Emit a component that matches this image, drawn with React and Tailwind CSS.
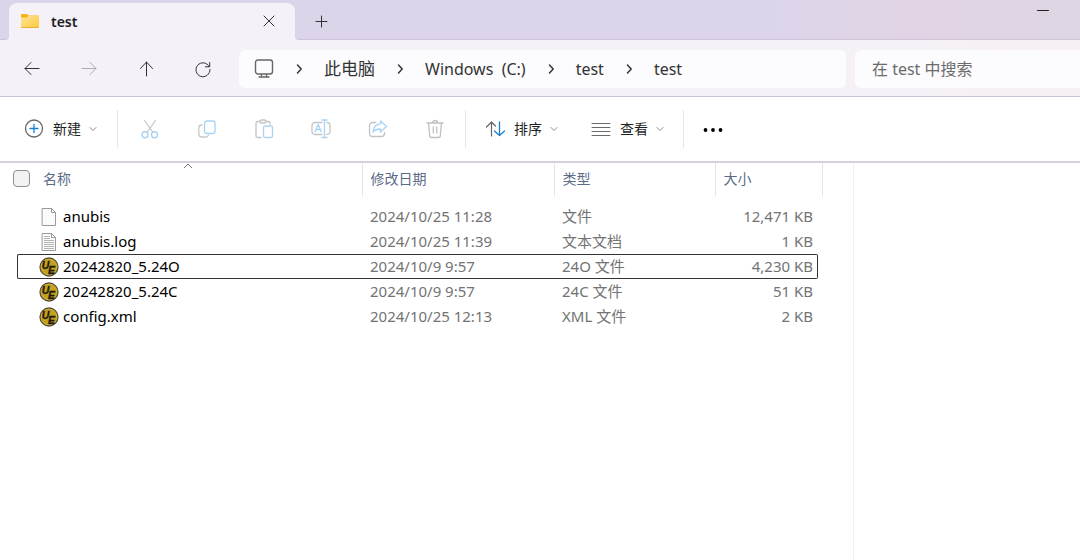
import React from "react";

const files = [
  { name: "anubis", date: "2024/10/25 11:28", type: "文件", size: "12,471 KB", icon: "blank" },
  { name: "anubis.log", date: "2024/10/25 11:39", type: "文本文档", size: "1 KB", icon: "text" },
  { name: "20242820_5.24O", date: "2024/10/9 9:57", type: "24O 文件", size: "4,230 KB", icon: "ue", focused: true },
  { name: "20242820_5.24C", date: "2024/10/9 9:57", type: "24C 文件", size: "51 KB", icon: "ue" },
  { name: "config.xml", date: "2024/10/25 12:13", type: "XML 文件", size: "2 KB", icon: "ue" },
];

function Icon({ size = 20, className = "", children }) {
  return (
    <svg
      width={size}
      height={size}
      viewBox={`0 0 ${size} ${size}`}
      fill="none"
      strokeLinecap="round"
      strokeLinejoin="round"
      className={`shrink-0 ${className}`}
      aria-hidden="true"
    >
      {children}
    </svg>
  );
}

function FolderIcon() {
  return (
    <Icon>
      <defs>
        <linearGradient id="folder" x1="0" y1="0" x2="1" y2="1">
          <stop offset="0" stopColor="#ffe59a" />
          <stop offset="1" stopColor="#fdc93c" />
        </linearGradient>
      </defs>
      <path d="M1 3.200C1 2.500 1.500 2 2.200 2h4.200c.5 0 .8.2 1.100.5L8.600 3.500H17.800c.7 0 1.200.5 1.200 1.200V8H1z" fill="#f5b21d" />
      <path d="M1 5.500h5.800L8.800 3.700H19v11.100c0 .7-.5 1.200-1.200 1.200H2.200C1.500 16 1 15.500 1 14.800z" fill="url(#folder)" />
      <path d="M1.600 15.500h16.800" stroke="#eeb02c" />
    </Icon>
  );
}

function Crumb({ large, children }) {
  return (
    <>
      <li aria-hidden="true">
        <svg width="8" height="12" viewBox="0 0 8 12" fill="none" stroke="#333" strokeWidth="1.500" strokeLinecap="round" strokeLinejoin="round">
          <path d="M2.500 2 6.200 6 2.500 10" />
        </svg>
      </li>
      <li>
        <a href="#" className={`whitespace-pre ${large ? "text-[17px]" : "text-base"}`}>{children}</a>
      </li>
    </>
  );
}

function ChevronDown() {
  return (
    <svg width="8" height="8" viewBox="0 0 8 8" fill="none" stroke="#8a8a8a" strokeLinecap="round" aria-hidden="true">
      <path d="M1 2.500 4 5.500 7 2.500" />
    </svg>
  );
}

function MenuButton({ label, children }) {
  return (
    <button type="button" aria-haspopup="menu" className="flex h-10 shrink-0 items-center px-4 text-sm text-[#1f1f1f]">
      {children}
      <span className="ml-[9px] mr-2">{label}</span>
      <ChevronDown />
    </button>
  );
}

function ToolButton({ label, children }) {
  return (
    <button type="button" disabled aria-label={label} className="flex h-10 w-[57px] shrink-0 items-center justify-center">
      <Icon>{children}</Icon>
    </button>
  );
}

function NavButton({ label, disabled, children }) {
  return (
    <button
      type="button"
      aria-label={label}
      disabled={disabled}
      className="flex h-9 w-[57px] shrink-0 items-center justify-center text-[#333] disabled:text-[#aeaab2]"
    >
      <Icon className="stroke-current">{children}</Icon>
    </button>
  );
}

function Divider() {
  return <div className="h-[38px] w-px shrink-0 bg-[#e6e6e6]" />;
}

function FileIcon({ kind }) {
  if (kind === "ue") {
    return (
      <Icon>
        <circle cx="10" cy="10" r="9" fill="#c4a01f" stroke="#55503c" strokeWidth="1.300" />
        <circle cx="10" cy="10" r="7.800" stroke="#d4b43a" strokeWidth=".7" />
        <g fill="#1d1a0c" stroke="#1d1a0c" strokeWidth=".3" fontFamily="Liberation Sans, sans-serif" fontWeight="700" fontStyle="italic">
          <text x="2.800" y="11.500" fontSize="10.500">U</text>
          <text x="9" y="16.500" fontSize="10.500">E</text>
        </g>
      </Icon>
    );
  }
  return (
    <Icon>
      <path d="M3.500 1.500h9l4 4v13h-13z" fill="#fbfbfb" stroke="#9a9a9a" strokeLinejoin="miter" />
      <path d="M12.500 1.500v4h4" stroke="#9a9a9a" strokeLinejoin="miter" />
      {kind === "text" && (
        <path d="M5 4.500h6M5 6.500h6M5 8.500h10M5 10.500h10M5 12.500h10M5 14.500h10M5 16.500h10" stroke="#b4b4b4" strokeLinecap="butt" />
      )}
    </Icon>
  );
}

function HeaderCell({ children }) {
  return (
    <th scope="col" className="border-r border-[#e5e5e5] p-0 pb-0.5 pl-2 text-left text-sm font-normal text-[#5b6b88]">
      {children}
    </th>
  );
}

function FileRow({ file }) {
  const line = file.focused ? "border-[#333]" : "border-transparent";
  const cell = `flex h-[25px] items-center border-y ${line}`;
  return (
    <tr className="text-[#737373]">
      <td className="p-0">
        <div className={`${cell} ml-[17px] rounded-l-xs border-l pl-[21px] text-black`}>
          <FileIcon kind={file.icon} />
          <span className="ml-1">{file.name}</span>
        </div>
      </td>
      <td className="p-0">
        <div className={`${cell} pl-2`}>{file.date}</div>
      </td>
      <td className="p-0">
        <div className={`${cell} pl-2`}>{file.type}</div>
      </td>
      <td className="p-0">
        <div className={`${cell} mr-1 justify-end rounded-r-xs border-r pr-1`}>{file.size}</div>
      </td>
    </tr>
  );
}

export default function App() {
  return (
    <div className="flex min-h-screen flex-col bg-white font-['Noto_Sans','Noto_Sans_CJK_SC',sans-serif] text-[15px]">
      <header className="border-b border-[#cdc2da] bg-linear-to-r from-[#f4f1f9] from-60% to-[#f6f0f5]">
        <div className="flex h-10">
          <div className="w-[9px] shrink-0 rounded-br border-b border-[#cdc5de] bg-[#dbd5ea]" />
          <div className="flex w-[286px] shrink-0 bg-linear-to-b from-[#dcd5ea] from-50% to-[#f4f1f9] to-50% pt-[3px]">
            <div className="flex flex-1 items-center rounded-t-lg bg-[#f4f1f9] pl-[11px] pr-4">
              <FolderIcon />
              <span className="ml-[11px] flex-1 text-sm font-semibold text-[#1f1f1f]">test</span>
              <button type="button" aria-label="关闭标签页" className="flex size-5 items-center justify-center">
                <Icon className="stroke-[#333]">
                  <path d="m5 4 10 10M15 4 5 14" />
                </Icon>
              </button>
            </div>
          </div>
          <div className="flex flex-1 items-start justify-between rounded-bl border-b border-[#cfc2d9] bg-linear-to-r from-[#dcd5ea] from-60% via-[#e1d4e4] via-80% to-[#ded6e2]">
            <button type="button" aria-label="新标签页" className="ml-4 mt-3 flex size-5 items-center justify-center">
              <Icon className="stroke-[#333]">
                <path d="M10.500 4v11M5 9.500h11" />
              </Icon>
            </button>
            <button type="button" aria-label="最小化" className="mr-[27px] flex size-5 items-center justify-center">
              <Icon className="stroke-[#222]">
                <path d="M4.500 10.500h11" />
              </Icon>
            </button>
          </div>
        </div>
        <div className="flex items-center pb-2 pl-[3px] pt-[10px]">
          <NavButton label="后退">
            <path d="M3 9.500h14M9 3.500l-6 6 6 6" />
          </NavButton>
          <NavButton label="前进" disabled>
            <path d="M3 9.500h14M11 3.500l6 6-6 6" />
          </NavButton>
          <NavButton label="上移">
            <path d="M10.500 3v14M4.500 9.500l6-6.500 6 6.500" />
          </NavButton>
          <NavButton label="刷新">
            <path d="M16.200 7.500A7 7 0 1 0 17 10.500M16.700 3.500v4.300h-4.300" />
          </NavButton>
          <nav aria-label="地址" className="ml-2 flex h-[38px] flex-1 items-center rounded-md bg-[#fcfcfe] pl-[15px]">
            <ol className="flex items-center gap-[21px] text-[#333]">
              <li>
                <Icon className="stroke-[#666]">
                  <rect x="1.500" y="1" width="17" height="14" rx="2.500" strokeWidth="1.400" />
                  <path d="M7.500 15.500v2M12.500 15.500v2M5 18h10" strokeWidth="1.300" />
                </Icon>
              </li>
              <Crumb large>此电脑</Crumb>
              <Crumb>{"Windows  (C:)"}</Crumb>
              <Crumb>test</Crumb>
              <Crumb>test</Crumb>
            </ol>
          </nav>
          <input
            type="search"
            aria-label="搜索"
            placeholder="在 test 中搜索"
            className="ml-[9px] h-[38px] w-[225px] shrink-0 rounded-l-md bg-[#fcfbfd] pl-[17px] text-base text-[#333] outline-none placeholder:text-[#6b6b6b]"
          />
        </div>
      </header>

      <div role="toolbar" aria-label="命令栏" className="flex h-[66px] items-center border-b-2 border-[#d9cfe2] pl-2">
        <MenuButton label="新建">
          <Icon>
            <circle cx="10" cy="9.500" r="8.500" stroke="#666" strokeWidth="1.300" />
            <path d="M10 5.500v8M6 9.500h8" stroke="#1683d8" strokeWidth="1.300" />
          </Icon>
        </MenuButton>
        <div className="ml-1 flex">
          <Divider />
        </div>
        <div className="ml-[3px] mr-0.5 flex">
          <ToolButton label="剪切">
            <path d="M4.500 1.500 13 13.500M15.500 1.500 7 13.500" stroke="#c4c4c4" strokeWidth="1.200" />
            <circle cx="5" cy="15.700" r="3" stroke="#a9d3f5" strokeWidth="1.400" />
            <circle cx="14.500" cy="15.700" r="3" stroke="#a9d3f5" strokeWidth="1.400" />
          </ToolButton>
          <ToolButton label="复制">
            <path d="M5 6H4.500A3 3 0 0 0 1.800 9v6a3 3 0 0 0 3 3h4a3 3 0 0 0 2.700-1.800" stroke="#c8c8c8" strokeWidth="1.300" />
            <rect x="7.500" y="2" width="10.500" height="12.500" rx="2.500" stroke="#a9d3f5" strokeWidth="1.300" />
          </ToolButton>
          <ToolButton label="粘贴">
            <path d="M6 2.500H3.500a1.500 1.500 0 0 0-1.500 1.500v13A1.500 1.500 0 0 0 3.500 18.500H7M12 2.500h2.500A1.500 1.500 0 0 1 16 4v1" stroke="#c4c4c4" strokeWidth="1.300" />
            <rect x="6" y="1" width="6" height="3" rx="1.500" stroke="#c4c4c4" strokeWidth="1.300" />
            <rect x="9.500" y="7" width="9" height="11.500" rx="1.500" stroke="#a9d3f5" strokeWidth="1.300" />
          </ToolButton>
          <ToolButton label="重命名">
            <path d="M11 3.500H4A3 3 0 0 0 1 6.500v6a3 3 0 0 0 3 3h7M16 3.500a3 3 0 0 1 3 3v6a3 3 0 0 1-3 3" stroke="#c4c4c4" strokeWidth="1.300" />
            <path d="M4 13 7.200 5.500 10.400 13M5.200 10.500h4M13.500 1v17.500M11 1h5M11 18.500h5" stroke="#a9d3f5" strokeWidth="1.300" />
          </ToolButton>
          <ToolButton label="共享">
            <path d="M8 3.500H4.500a3 3 0 0 0-3 3v8a3 3 0 0 0 3 3h9a3 3 0 0 0 3-3V13.500" stroke="#c4c4c4" strokeWidth="1.300" />
            <path d="M12.500 2 18.500 7.500l-6 5.500V10C9 10 6.800 10.800 5 13c.3-4.500 3-7.800 7.500-8.200z" stroke="#a9d3f5" strokeWidth="1.300" />
          </ToolButton>
          <ToolButton label="删除">
            <path d="M2 4h16M7.500 4a2.500 2.500 0 0 1 5 0M3.500 4l1.200 12.500A2 2 0 0 0 6.700 18.500h6.600a2 2 0 0 0 2-2L16.500 4M8.300 8v6M11.700 8v6" stroke="#c0c0c0" strokeWidth="1.300" />
          </ToolButton>
        </div>
        <Divider />
        <div className="mx-[3px] flex gap-px">
          <MenuButton label="排序">
            <Icon>
              <path d="M6.500 17V3.500M1.500 8l5-5 4 4" stroke="#666" strokeWidth="1.200" />
              <path d="M14.500 3v13.500M9.500 12l5 4.500 5-4.500" stroke="#1b7fd0" strokeWidth="1.300" />
            </Icon>
          </MenuButton>
          <MenuButton label="查看">
            <Icon className="stroke-[#6a6a6a]">
              <path d="M1 4.500h18M1 8.500h18M1 12.500h18M1 16.500h18" />
            </Icon>
          </MenuButton>
        </div>
        <Divider />
        <button type="button" aria-label="更多" className="ml-[9px] flex size-10 items-center justify-center">
          <Icon className="fill-black">
            <circle cx="2.500" cy="11" r="1.900" />
            <circle cx="10" cy="11" r="1.900" />
            <circle cx="17.500" cy="11" r="1.900" />
          </Icon>
        </button>
      </div>

      <main className="flex flex-1">
        <div className="w-[854px] shrink-0 border-r border-[#f0f0f0]">
          <table className="w-[822px] table-fixed border-collapse">
            <colgroup>
              <col className="w-[362px]" />
              <col className="w-[192px]" />
              <col className="w-[161px]" />
              <col className="w-[107px]" />
            </colgroup>
            <thead>
              <tr className="h-[33px]">
                <th scope="col" className="relative border-r border-[#e5e5e5] p-0 pb-0.5 text-left text-sm font-normal text-[#5b6b88]">
                  <div className="flex items-center pl-[13px]">
                    <input
                      type="checkbox"
                      aria-label="全选"
                      className="size-[17px] appearance-none rounded border border-[#8f8f8f] bg-[#f3f3f3]"
                    />
                    <span className="ml-[13px]">名称</span>
                  </div>
                  <svg
                    width="10"
                    height="6"
                    viewBox="0 0 10 6"
                    fill="none"
                    stroke="#777"
                    className="absolute left-1/2 top-0 ml-0.5"
                    aria-hidden="true"
                  >
                    <path d="M1 5 5 1l4 4" />
                  </svg>
                </th>
                <HeaderCell>修改日期</HeaderCell>
                <HeaderCell>类型</HeaderCell>
                <HeaderCell>大小</HeaderCell>
              </tr>
            </thead>
            <tbody className="before:block before:h-2">
              {files.map((file) => (
                <FileRow key={file.name} file={file} />
              ))}
            </tbody>
          </table>
        </div>
        <aside aria-label="预览" className="flex-1" />
      </main>
    </div>
  );
}
